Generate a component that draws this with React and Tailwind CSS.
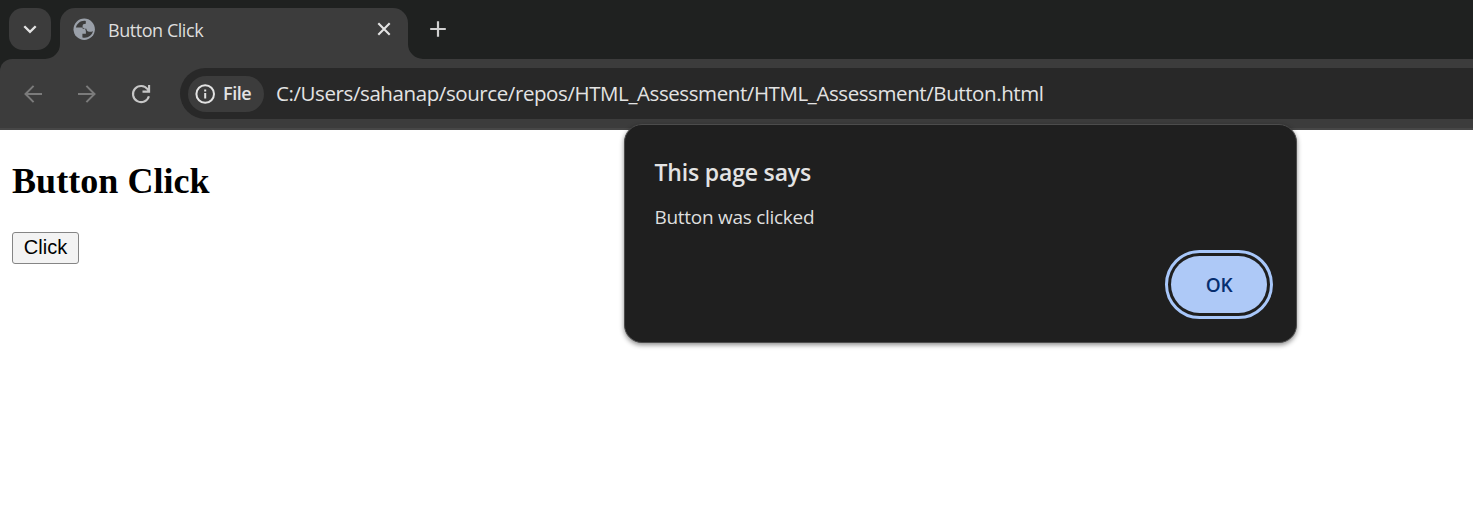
const UI = "font-['Open_Sans','Noto_Sans',sans-serif]";

function TabStrip() {
  return (
    <div className="flex h-[59px] items-start bg-[#1f2120] pl-[9px] pt-2">
      <button className="flex h-[42px] w-[42px] items-center justify-center rounded-[14px] bg-[#3c3c3c]">
        <svg className="h-[42px] w-[42px]" viewBox="0 0 42 42" fill="none" stroke="#e3e3e3" strokeWidth="2.3">
          <path d="M15.3 18.2 21 23.9 26.7 18.2" />
        </svg>
      </button>
      <svg className="-ml-[6px] h-[51px] w-[15px]" viewBox="0 0 15 51" fill="#3c3c3c">
        <path d="M15 36v15H0A15 15 0 0 0 15 36z" />
      </svg>
      <div className="flex h-[51px] w-[348px] items-start rounded-t-[15px] bg-[#3c3c3c] pl-[13px]">
        <svg className="mt-[10px] h-[23px] w-[23px] shrink-0" viewBox="0 0 23 23">
          <circle cx="11.2" cy="11.2" r="10.7" fill="#9aa0a9" />
          <path
            d="M12.8 3C8 2.2 4.1 5.2 2.9 9.6h5.4c2.8 0 4.6 1.5 4.6 4v2.2H9.4v3.6c4.9 1.3 9.8-1.7 10.5-6.4-1 .7-2.2 1-3.5.8-2.2-.3-2.9-1.6-3-3.1H9.6V8c0-1.5 1-2.2 3.2-2.3z"
            fill="#3c3c3c"
          />
        </svg>
        <span className="ml-3 mt-[9px] w-[110px] shrink-0 whitespace-nowrap text-[18px] leading-[26px] tracking-[-0.45px] text-[#dedede]">
          Button Click
        </span>
        <svg className="ml-[154px] mt-[9px] h-6 w-6 shrink-0" viewBox="0 0 24 24" stroke="#e3e3e3" strokeWidth="2.1">
          <path d="m6.3 6.3 11.4 11.4M17.7 6.3 6.3 17.7" />
        </svg>
      </div>
      <svg className="h-[51px] w-[15px]" viewBox="0 0 15 51" fill="#3c3c3c">
        <path d="M0 36v15h15A15 15 0 0 1 0 36z" />
      </svg>
      <svg className="ml-[3px] mt-[9px] h-6 w-6" viewBox="0 0 24 24" stroke="#d0d0d0" strokeWidth="2.2">
        <path d="M12 4.2v15.6M4.2 12h15.6" />
      </svg>
    </div>
  );
}

function Toolbar() {
  return (
    <div className="h-[71px] bg-[#1f2120]">
      <div className="flex h-[71px] items-start rounded-tl-[12px] border-b-2 border-[#474747] bg-[#3c3c3c] pt-[9px]">
        <div className="flex h-[51px] w-[180px] items-center pl-[21px]">
          <svg className="h-6 w-6" viewBox="0 0 24 24" fill="none" stroke="#7b7b7b" strokeWidth="2">
            <path d="M21 12H4.8M12.6 3.9 4.5 12l8.1 8.1" />
          </svg>
          <svg className="ml-[30px] h-6 w-6" viewBox="0 0 24 24" fill="none" stroke="#7b7b7b" strokeWidth="2">
            <path d="M3 12h16.2M11.4 3.9l8.1 8.1-8.1 8.1" />
          </svg>
          <svg className="ml-[30px] h-6 w-6" viewBox="0 0 24 24" fill="none" stroke="#c7c7c7" strokeWidth="2.1">
            <path d="M19.9 14.2A8.1 8.1 0 1 1 18.6 7.2l1.5 1.9M20.1 3v6.6h-6.6" />
          </svg>
        </div>
        <div className="flex h-[51px] flex-1 items-center rounded-l-full bg-[#282828] pl-2">
          <div className="flex h-9 w-[76px] items-center rounded-full bg-[#3c3c3c] pl-[7px]">
            <svg className="h-5 w-5" viewBox="0 0 20 20" fill="none" stroke="#e3e3e3" strokeWidth="2">
              <circle cx="10.2" cy="10" r="8.8" />
              <path d="M10.2 9v5.4M10.2 5.4v2" />
            </svg>
            <span className="ml-2 pb-px text-[18px] font-semibold leading-6 tracking-[-0.45px] text-[#e3e3e3]">File</span>
          </div>
          <span className="ml-3 whitespace-nowrap pb-0.5 text-[20.5px] leading-7 tracking-[-0.41px] text-[#e3e3e3]">
            C:/Users/sahanap/source/repos/HTML_Assessment/HTML_Assessment/Button.html
          </span>
        </div>
      </div>
    </div>
  );
}

function AlertDialog() {
  return (
    <div
      role="alertdialog"
      className="absolute left-[624px] top-[124px] flex h-[219px] w-[673px] flex-col rounded-[18px] border border-[#4c4c4c] bg-[#1f1f1f] pl-[29.5px] pr-[29px] shadow-[0_2px_5px_rgba(0,0,0,0.45)]"
    >
      <h2 className="mt-[31px] text-[23px] font-semibold leading-8 tracking-[-0.17px] text-[#e3e3e3]">This page says</h2>
      <p className="mt-4 text-[19px] leading-[26px] tracking-[-0.28px] text-[#dedede]">Button was clicked</p>
      <button className="mt-[26px] flex h-[57px] w-24 items-center justify-center self-end rounded-full bg-[#aec9f7] pt-0.5 text-[19px] font-semibold tracking-[-0.2px] text-[#062e6f] outline-3 outline-offset-3 outline-[#a8c7fa]">
        OK
      </button>
    </div>
  );
}

export default function App() {
  return (
    <div className={`relative h-[507px] w-full overflow-hidden bg-white ${UI}`}>
      <TabStrip />
      <Toolbar />
      <main className="flex flex-col items-start pl-3 pt-[30px]">
        <h1 className="font-['Liberation_Serif',serif] text-[36px] font-bold leading-[42px] tracking-[0.05px] text-black">
          Button Click
        </h1>
        <button className="mt-[30px] h-8 w-[67px] rounded-[3px] border border-[#858585] bg-[#f3f3f3] pb-0.5 font-['Liberation_Sans',sans-serif] text-[20px] leading-[28px] text-black">
          Click
        </button>
      </main>
      <AlertDialog />
    </div>
  );
}
